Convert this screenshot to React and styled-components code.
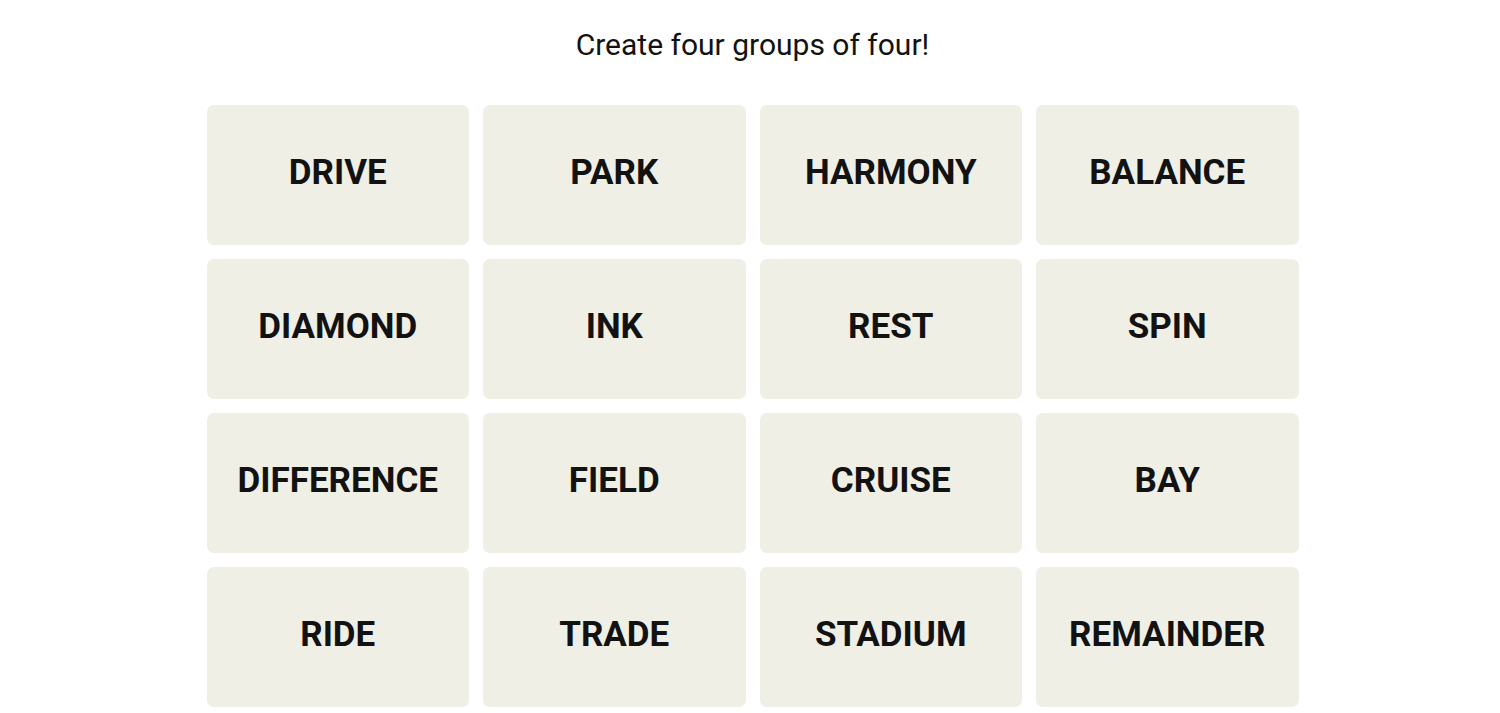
import React from "react";
import styled, { createGlobalStyle } from "styled-components";

const Global = createGlobalStyle`
  html, body { margin: 0; padding: 0; background: #ffffff; }
  body { font-family: Roboto, "Liberation Sans", sans-serif; color: #121212; }
`;

const Page = styled.main`
  display: flex;
  flex-direction: column;
  align-items: center;
  padding: 28px 0 0 5px;
  box-sizing: border-box;
`;

const Heading = styled.h2`
  margin: 0 0 43px;
  font-family: Roboto, "Liberation Sans", sans-serif;
  font-weight: 400;
  font-size: 30px;
  line-height: 34px;
  color: #121212;
`;

const Board = styled.div`
  display: grid;
  grid-template-columns: repeat(4, 262.5px);
  grid-auto-rows: 140px;
  gap: 14px;
`;

const Tile = styled.button`
  display: flex;
  align-items: center;
  justify-content: center;
  border: none;
  border-radius: 7px;
  background: #efefe6;
  color: #121212;
  font-family: Roboto, "Liberation Sans", sans-serif;
  font-weight: 700;
  font-size: 35px;
  text-transform: uppercase;
  padding: 0 0 6px;
  cursor: pointer;
`;

const words = [
  "Drive", "Park", "Harmony", "Balance",
  "Diamond", "Ink", "Rest", "Spin",
  "Difference", "Field", "Cruise", "Bay",
  "Ride", "Trade", "Stadium", "Remainder",
];

export default function App() {
  return (
    <>
      <Global />
      <Page>
        <Heading>Create four groups of four!</Heading>
        <Board>
          {words.map((w) => (
            <Tile key={w}>{w}</Tile>
          ))}
        </Board>
      </Page>
    </>
  );
}
